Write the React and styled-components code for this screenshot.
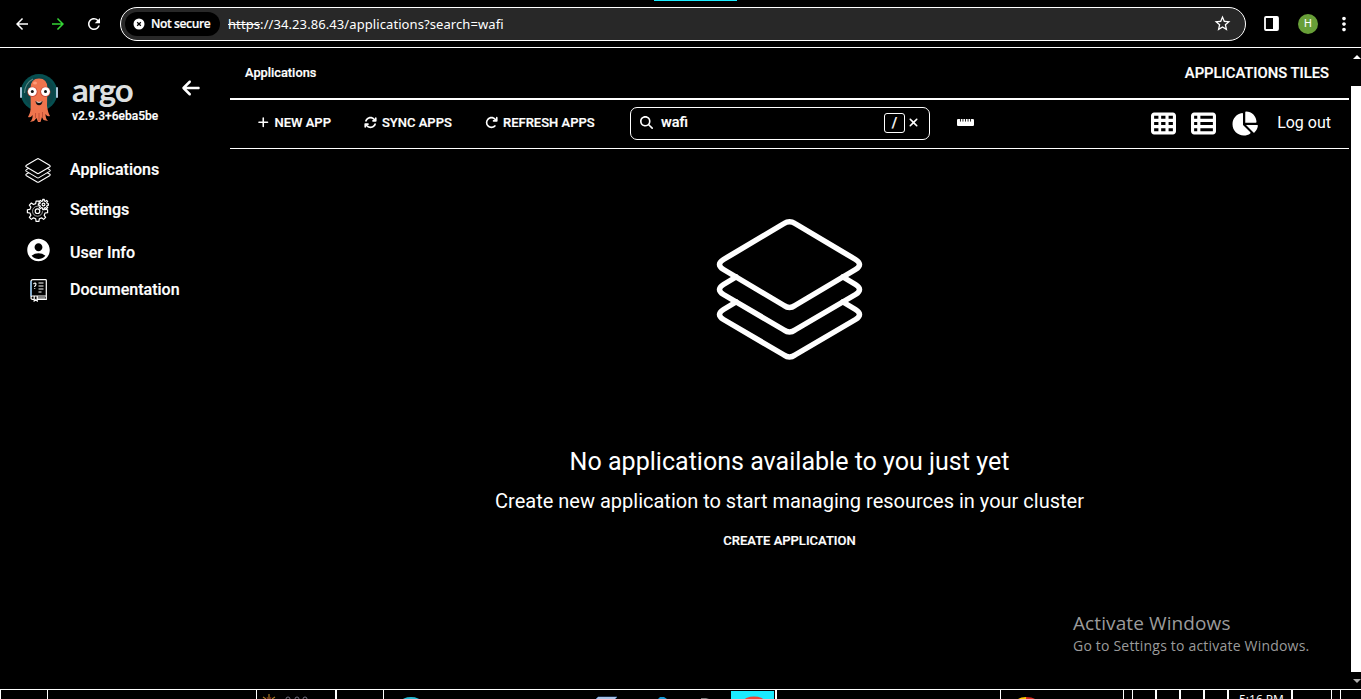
import React from "react";
import styled, { createGlobalStyle, css } from "styled-components";
import {
  FaPlus, FaArrowsRotate, FaArrowRotateRight, FaArrowLeft, FaMagnifyingGlass,
  FaXmark, FaRulerHorizontal, FaTableCells, FaTableList, FaChartPie,
} from "react-icons/fa6";
import { MdArrowBack, MdArrowForward, MdRefresh, MdStarBorder, MdAccountCircle, MdMoreVert } from "react-icons/md";

const GlobalStyle = createGlobalStyle`
  * { box-sizing: border-box; }
  html, body { margin: 0; background: #000; overflow: hidden; }
  body { font-family: Roboto, "Liberation Sans", sans-serif; color: #fff; }
  svg { display: block; flex: none; }
`;

const strong = css`
  font-weight: 500;
  -webkit-text-stroke: 0.2px #fff;
`;

const Screen = styled.div`
  width: 1361px;
  height: 699px;
  display: flex;
  flex-direction: column;
  background: #000;
  overflow: hidden;
`;

/* Browser bar */
const BrowserBar = styled.header`
  height: 48px;
  flex: none;
  display: flex;
  align-items: center;
  padding: 0 0 0 13px;
  border-bottom: 1px solid #fff;
  position: relative;
  font-family: "Noto Sans", "Open Sans", sans-serif;
`;
const TabAccent = styled.div`
  position: absolute;
  top: 0;
  left: 654px;
  width: 83px;
  height: 1px;
  background: #1aebff;
`;
const NavButton = styled.span`
  width: 36px;
  flex: none;
  display: flex;
  color: ${(p) => p.$color || "#fff"};
`;
const AddressBar = styled.div`
  width: 1126px;
  flex: none;
  height: 34px;
  margin-left: -1px;
  display: flex;
  align-items: center;
  padding: 0 13px 0 4px;
  background: #282828;
  border: 1px solid #fff;
  border-radius: 17px;
`;
const SecurityChip = styled.div`
  width: 95px;
  height: 24px;
  display: flex;
  align-items: center;
  gap: 6px;
  padding-left: 8px;
  background: #000;
  border-radius: 12px;
  font: 600 12px/24px "Open Sans", "Noto Sans", sans-serif;
  letter-spacing: -0.38px;
  -webkit-text-stroke: 0.2px #fff;
  white-space: nowrap;
`;
const Url = styled.div`
  flex: 1;
  padding-left: 8px;
  font-size: 13px;
  letter-spacing: 0.085px;
  white-space: nowrap;
`;
const Struck = styled.span`
  text-decoration: line-through;
`;
const BrowserActions = styled.div`
  display: flex;
  align-items: center;
  padding-left: 18px;
`;
const Avatar = styled.span`
  width: 20px;
  height: 20px;
  margin: 0 15px 0 19px;
  border-radius: 50%;
  background: #689f38;
  font: 400 11px/20px Roboto, sans-serif;
  text-align: center;
`;

/* Page */
const Page = styled.div`
  flex: 1;
  min-height: 0;
  display: flex;
`;
const Sidebar = styled.aside`
  width: 230px;
  flex: none;
`;
const Brand = styled.div`
  height: 101px;
  display: flex;
  padding: 23px 0 0 18px;
`;
const BrandText = styled.div`
  width: 109px;
  padding-left: 12px;
`;
const Wordmark = styled.div`
  height: 38px;
  color: #dee0e1;
  font: 700 33px/37px Lato, sans-serif;
  letter-spacing: -1.1px;
`;
const Version = styled.div`
  font-size: 12px;
  line-height: 14px;
  white-space: nowrap;
  ${strong}
`;
const Collapse = styled.span`
  padding: 7px 0 0 12px;
`;
const NavItem = styled.a`
  height: ${(p) => p.$height}px;
  display: flex;
  align-items: center;
  padding-left: 25px;
  font-size: 16px;
  ${strong}
`;
const NavIcon = styled.span`
  width: 45px;
  height: 30px;
  display: flex;
  align-items: center;
  padding-left: ${(p) => p.$inset || 0}px;
  transform: translateY(${(p) => p.$shift || 0}px);
`;

const Main = styled.main`
  width: 1119px;
  flex: none;
  display: flex;
  flex-direction: column;
`;
const TopBar = styled.div`
  height: 52px;
  flex: none;
  display: flex;
  align-items: center;
  justify-content: space-between;
  padding: 0 20px 0 15px;
  border-bottom: 2px solid #fff;
`;
const Crumb = styled.span`
  padding-bottom: 2px;
  font-size: 12.8px;
  ${strong}
`;
const ViewTitle = styled.span`
  font-size: 14.8px;
  ${strong}
`;
const Toolbar = styled.div`
  height: 49px;
  flex: none;
  display: flex;
  align-items: center;
  padding: 0 18px 3px 27px;
  border-bottom: 1px solid #fff;
`;
const Action = styled.span`
  width: ${(p) => p.$width}px;
  display: flex;
  align-items: center;
  gap: 5px;
  font-size: 13px;
  white-space: nowrap;
  ${strong}
`;
const SearchBox = styled.div`
  width: 300px;
  height: 33px;
  margin-top: 1px;
  display: flex;
  align-items: center;
  padding: 0 9px 1px 9px;
  border: 1px solid #fff;
  border-radius: 7px;
  font-size: 14.5px;
  ${strong}
`;
const SearchValue = styled.span`
  flex: 1;
  padding: 0 0 1px 8px;
`;
const KeyHint = styled.kbd`
  width: 21px;
  height: 20px;
  margin-right: 2px;
  border: 1px solid #fff;
  border-radius: 3px;
  font: 500 14px/18px Roboto, sans-serif;
  text-align: center;
`;
const RulerButton = styled.span`
  padding-left: 27px;
  flex: 1;
`;
const ViewModes = styled.div`
  display: flex;
  align-items: center;
  gap: 15px;
  padding-top: 1px;
`;
const LogOut = styled.a`
  margin-left: 19px;
  font-size: 16px;
`;

const EmptyState = styled.section`
  flex: 1;
  display: flex;
  flex-direction: column;
  align-items: center;
  padding-top: 68.5px;
  white-space: nowrap;
`;
const EmptyTitle = styled.h4`
  margin: 84.5px 0 0;
  font-size: 25.05px;
  line-height: 34px;
  font-weight: 400;
`;
const EmptyHint = styled.h5`
  margin: 8px 0 0;
  font-size: 20px;
  line-height: 28px;
  font-weight: 400;
`;
const CreateButton = styled.button`
  margin-top: 18px;
  padding: 0;
  border: 0;
  background: none;
  color: #fff;
  font: 500 13px/16px Roboto, sans-serif;
  ${strong}
`;
const Watermark = styled.div`
  position: absolute;
  left: 1073px;
  top: 610px;
  color: #9b9b9b;
  font-family: "Open Sans", "Noto Sans", sans-serif;
  white-space: nowrap;
`;
const WatermarkTitle = styled.div`
  font-size: 19px;
  line-height: 26px;
  letter-spacing: 0.1px;
`;
const WatermarkText = styled.div`
  font-size: 14px;
  line-height: 19px;
  letter-spacing: 0.2px;
`;

const Scrollbar = styled.div`
  width: 10px;
  margin-left: 2px;
  display: flex;
  flex-direction: column;
  align-items: flex-start;
`;
const ScrollArrow = styled.span`
  width: 0;
  height: 0;
  margin: ${(p) => (p.$down ? "7px 0 0 2px" : "7px 0 26px 2px")};
  border: 4px solid transparent;
  ${(p) => p.$down
    ? css`border-top-color: #b0b0b0; border-bottom: 0;`
    : css`border-bottom-color: #fff; border-top: 0;`}
`;
const ScrollThumb = styled.span`
  width: 10px;
  height: 586px;
  margin-top: 1px;
  background: #fff;
`;

/* Taskbar */
const Taskbar = styled.footer`
  height: 10px;
  flex: none;
  display: flex;
  border-top: 1px solid #fff;
  overflow: hidden;
`;
const TaskCell = styled.div`
  width: ${(p) => p.$width}px;
  flex: none;
  height: 9px;
  overflow: hidden;
  border-left: ${(p) => (p.$line === undefined ? 1 : p.$line)}px solid #fff;
`;
const ActiveTask = styled(TaskCell)`
  margin-top: 1px;
  background: #1aebff;
`;
const Clock = styled.div`
  padding-left: 10px;
  font: 400 12px/16px "Open Sans", "Noto Sans", sans-serif;
  white-space: nowrap;
  margin-top: 2px;
`;

function StackIcon({ width, height, stroke }) {
  return (
    <svg width={width} height={height} viewBox="716 217.5 147 143" fill="none" stroke="#fff" strokeWidth={stroke} strokeLinecap="round">
      <path d="M784 223Q789.5 219.5 795 223L855.5 259Q863.5 264 855.5 269L795 305Q789.5 309 784 305L723.5 269Q715.5 264 723.5 259Z" />
      <path d="M736 276.5L723.5 284Q715.5 289 723.5 294L784 329.5Q789.5 333.5 795 329.5L855.5 294Q863.5 289 855.5 284L843 276.5" />
      <path d="M736 301.5L723.5 309Q715.5 314 723.5 319L784 354.5Q789.5 358.5 795 354.5L855.5 319Q863.5 314 855.5 309L843 301.5" />
    </svg>
  );
}

function ArgoMascot() {
  return (
    <svg width="42" height="55" viewBox="0 0 42 55">
      <circle cx="21" cy="21.5" r="18.4" fill="#064f50" />
      <circle cx="21" cy="21.5" r="15.7" fill="#0b4548" />
      <path d="M6.5 22Q7 12 15 8" fill="none" stroke="#568682" strokeWidth="1.3" />
      <rect x="2" y="16" width="2" height="11" rx="1" fill="#a9c6d9" />
      <rect x="38" y="16" width="2" height="11" rx="1" fill="#a9c6d9" />
      <path d="M12.6 17Q12.6 7.5 21 7.5T29.4 17L29 35Q30 42 32 45Q29 46 27.5 43Q27.5 48 30 50L25.5 49L24 46L22.5 51H20L18.5 47L16 50L12 51Q15 48 14.5 44Q13 47 10 46Q13 41 12.7 35Z" fill="#ef744d" />
      <path d="M17.5 42V47M21 42V50M24.5 41V46" stroke="#b94633" strokeWidth=".8" />
      <ellipse cx="17" cy="12" rx="2" ry="1.5" fill="#ff9b78" />
      <circle cx="14.5" cy="20.9" r="5.1" fill="#cc4936" />
      <circle cx="27.3" cy="20.9" r="5.1" fill="#cc4936" />
      <circle cx="14.3" cy="20.6" r="4.4" fill="#fff" />
      <circle cx="27.5" cy="20.6" r="4.4" fill="#fff" />
      <circle cx="14.3" cy="20.6" r="1.5" fill="#111" />
      <circle cx="27.5" cy="20.6" r="1.5" fill="#111" />
      <path d="M17.5 30Q21 32.5 24.5 30Q24 34.3 21 34.3T17.5 30Z" fill="#111" />
      <path d="M18.5 30.8Q21 32.2 23.5 30.8" stroke="#fff" fill="none" strokeWidth=".8" />
    </svg>
  );
}

function gearPath(cx, cy, outer, inner, teeth) {
  const points = [];
  const step = (Math.PI * 2) / teeth;
  for (let i = 0; i < teeth; i += 1) {
    [[-0.3, inner], [-0.18, outer], [0.18, outer], [0.3, inner]].forEach(([offset, r]) => {
      const a = (i + offset) * step - Math.PI / 2;
      points.push(`${(cx + Math.cos(a) * r).toFixed(2)} ${(cy + Math.sin(a) * r).toFixed(2)}`);
    });
  }
  return `M${points.join("L")}Z`;
}

function GearsIcon() {
  return (
    <svg width="24" height="24" viewBox="0 0 24 24" fill="none" stroke="#fff" strokeWidth="1.2" strokeLinejoin="round">
      <path d={gearPath(12.5, 13.2, 10.2, 7.8, 8)} />
      <circle cx="12.5" cy="13.2" r="5" strokeDasharray="25 6.4" strokeWidth=".6" />
      <circle cx="12.5" cy="13.2" r="2.3" />
      <path d={gearPath(18.5, 6.5, 5.2, 3.7, 8)} fill="#000" />
      <circle cx="18.5" cy="6.5" r="1.4" />
    </svg>
  );
}

function DocsIcon() {
  return (
    <svg width="20" height="24" viewBox="0 0 20 24" fill="none" stroke="#fff" strokeWidth="1.2">
      <path d="M4 19V3.5Q4 1.7 6 1.7H18.5Q19.3 1.7 19.3 2.5V18H5.5Q4 18 4 19.7T5.5 21.4H7M10 21.4H19.3V18" />
      <path d="M4 18V3" stroke="#72bfff" strokeWidth="1" />
      <path d="M7.2 18V23L8.7 21.8L10.2 23V18M10 20H18" />
      <path d="M6.5 6Q8.3 4 9 6Q9 7.2 7.7 8.4V9M7.7 10.2V11.1M11.5 5H16.5M11.5 8H16.5M11.5 11H16.5M11.5 14H14.5" />
    </svg>
  );
}

function NotSecureIcon() {
  return (
    <svg width="12" height="12" viewBox="0 0 12 12">
      <circle cx="6" cy="6" r="5.5" fill="#fff" />
      <path d="M4.2 4.2L7.8 7.8M7.8 4.2L4.2 7.8" stroke="#000" strokeWidth="1.3" />
    </svg>
  );
}

function SidePanelIcon() {
  return (
    <svg width="15" height="15" viewBox="0 0 15 15">
      <rect x="1" y="1" width="13" height="13" rx="1" fill="none" stroke="#fff" strokeWidth="1.8" />
      <path d="M9 1H14V14H9Z" fill="#fff" />
    </svg>
  );
}

function WeatherIcon() {
  return (
    <svg width="60" height="9" viewBox="0 0 60 9" fill="none">
      <path d="M12 4V9M6 7L9 9M18 7L15 9" stroke="#a87822" strokeWidth="1.2" />
      <path d="M10 7L11 9M14 7L13 9" stroke="#92301c" />
      <circle cx="31" cy="9" r="2" stroke="#777382" />
      <circle cx="40" cy="9" r="2" stroke="#777382" />
      <circle cx="48" cy="9" r="2" stroke="#777382" />
    </svg>
  );
}

function PinnedIcons() {
  return (
    <svg width="347" height="9" viewBox="384 690 347 9">
      <ellipse cx="411" cy="702" rx="10" ry="5" fill="#27bbd5" />
      <path d="M598 697H617L615 699H596Z" fill="#dcecff" stroke="#4878bf" strokeWidth=".7" />
      <path d="M658 699L660 697H664L667 699Z" fill="#1599d6" />
      <path d="M701 698H706L709 699H701Z" fill="#777" />
    </svg>
  );
}

const trayCells = [[123, "chrome"], [9], [23], [24, null, 2], [24, null, 2], [24, null, 2], [64, "clock", 2], [40, null, 2], [9], [21]];

export default function App() {
  return (
    <Screen>
      <GlobalStyle />
      <BrowserBar>
        <TabAccent />
        <NavButton><MdArrowBack size={18} /></NavButton>
        <NavButton $color="#35d335"><MdArrowForward size={18} /></NavButton>
        <NavButton><MdRefresh size={18} /></NavButton>
        <AddressBar>
          <SecurityChip><NotSecureIcon />Not secure</SecurityChip>
          <Url><Struck>https</Struck>://34.23.86.43/applications?search=wafi</Url>
          <MdStarBorder size={19} />
        </AddressBar>
        <BrowserActions>
          <SidePanelIcon />
          <Avatar>H</Avatar>
          <MdMoreVert size={22} />
        </BrowserActions>
      </BrowserBar>
      <Page>
        <Sidebar>
          <Brand>
            <ArgoMascot />
            <BrandText>
              <Wordmark>argo</Wordmark>
              <Version>v2.9.3+6eba5be</Version>
            </BrandText>
            <Collapse><FaArrowLeft size={20} /></Collapse>
          </Brand>
          <NavItem $height={40}><NavIcon $shift={1}><StackIcon width={26} height={25} stroke={6} /></NavIcon>Applications</NavItem>
          <NavItem $height={40}><NavIcon $shift={1}><GearsIcon /></NavIcon>Settings</NavItem>
          <NavItem $height={46}><NavIcon $shift={-2.5}><MdAccountCircle size={27} /></NavIcon>User Info</NavItem>
          <NavItem $height={28}><NavIcon $shift={1} $inset={1.5}><DocsIcon /></NavIcon>Documentation</NavItem>
        </Sidebar>
        <Main>
          <TopBar>
            <Crumb>Applications</Crumb>
            <ViewTitle>APPLICATIONS TILES</ViewTitle>
          </TopBar>
          <Toolbar>
            <Action $width={107}><FaPlus size={12.5} />NEW APP</Action>
            <Action $width={121}><FaArrowsRotate size={13} />SYNC APPS</Action>
            <Action $width={145}><FaArrowRotateRight size={13} />REFRESH APPS</Action>
            <SearchBox>
              <FaMagnifyingGlass size={13} />
              <SearchValue>wafi</SearchValue>
              <KeyHint>/</KeyHint>
              <FaXmark size={13} />
            </SearchBox>
            <RulerButton><FaRulerHorizontal size={17} /></RulerButton>
            <ViewModes>
              <FaTableCells size={25} />
              <FaTableList size={25} />
              <FaChartPie size={27} />
            </ViewModes>
            <LogOut>Log out</LogOut>
          </Toolbar>
          <EmptyState>
            <StackIcon width={147} height={143} stroke={5.5} />
            <EmptyTitle>No applications available to you just yet</EmptyTitle>
            <EmptyHint>Create new application to start managing resources in your cluster</EmptyHint>
            <CreateButton>CREATE APPLICATION</CreateButton>
          </EmptyState>
        </Main>
        <Scrollbar>
          <ScrollArrow />
          <ScrollThumb />
          <ScrollArrow $down />
        </Scrollbar>
      </Page>
      <Taskbar>
        <TaskCell $width={47} />
        <TaskCell $width={209} />
        <TaskCell $width={79}><WeatherIcon /></TaskCell>
        <TaskCell $width={48} $line={2} />
        <TaskCell $width={348}><PinnedIcons /></TaskCell>
        <ActiveTask $width={43} $line={0}>
          <svg width="43" height="8" viewBox="0 0 43 8"><ellipse cx="23" cy="10" rx="10" ry="4.5" fill="#ed4536" /></svg>
        </ActiveTask>
        <TaskCell $width={1} $line={0} />
        <TaskCell $width={225} $line={2} />
        {trayCells.map(([width, kind, line], index) => (
          <TaskCell key={index} $width={width} $line={line}>
            {kind === "clock" && <Clock>5:16 PM</Clock>}
            {kind === "chrome" && (
              <svg width="50" height="9" viewBox="0 0 50 9">
                <path d="M17 9Q20 7 25 7V9Z" fill="#ffc400" />
                <path d="M25 7Q31 7 34 9H25Z" fill="#d92c20" />
              </svg>
            )}
          </TaskCell>
        ))}
      </Taskbar>
      <Watermark>
        <WatermarkTitle>Activate Windows</WatermarkTitle>
        <WatermarkText>Go to Settings to activate Windows.</WatermarkText>
      </Watermark>
    </Screen>
  );
}
